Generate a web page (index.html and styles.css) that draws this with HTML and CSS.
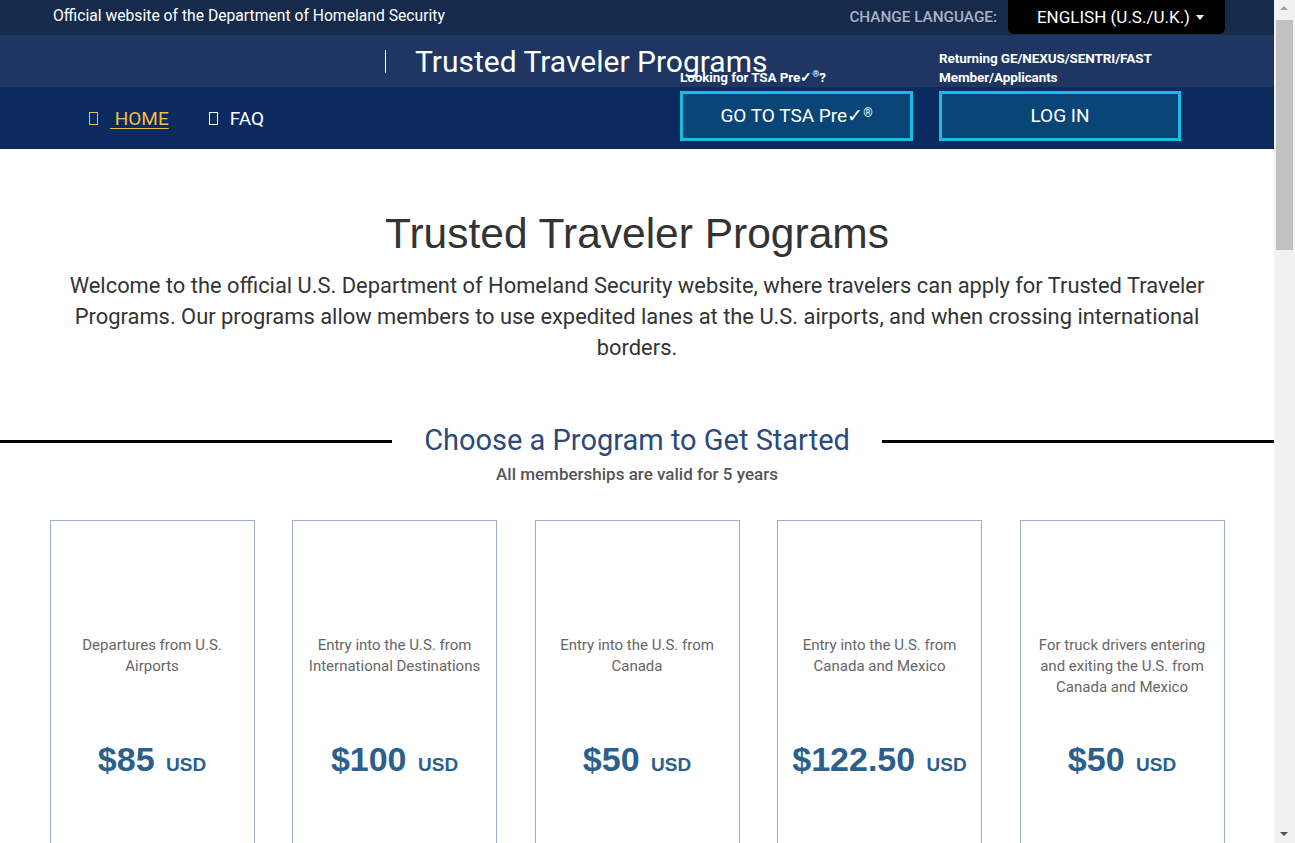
FILE: index.html
```html
<!DOCTYPE html>
<html lang="en">
<head>
<meta charset="utf-8">
<title>Trusted Traveler Programs</title>
<link rel="stylesheet" href="styles.css">
</head>
<body>
<div class="page">
<header class="header">
  <div class="topbar">
    <span class="official">Official website of the Department of Homeland Security</span>
    <div class="lang">
      <span class="lang-label">CHANGE LANGUAGE:</span>
      <button class="lang-btn">ENGLISH (U.S./U.K.) <span class="caret"></span></button>
    </div>
  </div>
  <div class="brandbar">
    <span class="divider"></span>
    <span class="brand-title">Trusted Traveler Programs</span>
  </div>
  <nav class="navbar">
    <a class="nav-link active" href="#"><span class="icon-box"></span> <span class="u">&nbsp;HOME</span></a>
    <a class="nav-link" href="#"><span class="icon-box"></span> <span>FAQ</span></a>
  </nav>
  <div class="actions">
    <div class="action">
      <span class="action-label">Looking for TSA Pre&#10003;<sup>&reg;</sup>?</span>
      <a class="action-btn" href="#">GO TO TSA Pre&#10003;<sup>&reg;</sup></a>
    </div>
    <div class="action wide">
      <span class="action-label">Returning GE/NEXUS/SENTRI/FAST<br>Member/Applicants</span>
      <a class="action-btn" href="#">LOG IN</a>
    </div>
  </div>
</header>

<main class="main">
  <section class="intro">
    <h1 class="page-title">Trusted Traveler Programs</h1>
    <p class="lead">Welcome to the official U.S. Department of Homeland Security website, where travelers can apply for Trusted Traveler Programs. Our programs allow members to use expedited lanes at the U.S. airports, and when crossing international borders.</p>
  </section>

  <section class="programs">
    <div class="section-head">
      <span class="rule"></span>
      <h2 class="section-title">Choose a Program to Get Started</h2>
      <span class="rule"></span>
    </div>
    <p class="section-sub">All memberships are valid for 5 years</p>

    <div class="cards">
      <div class="card">
        <p class="card-text">Departures from U.S. Airports</p>
        <p class="price">$85 <span class="cur">USD</span></p>
      </div>
      <div class="card">
        <p class="card-text">Entry into the U.S. from International Destinations</p>
        <p class="price">$100 <span class="cur">USD</span></p>
      </div>
      <div class="card">
        <p class="card-text">Entry into the U.S. from Canada</p>
        <p class="price">$50 <span class="cur">USD</span></p>
      </div>
      <div class="card">
        <p class="card-text">Entry into the U.S. from Canada and Mexico</p>
        <p class="price">$122.50 <span class="cur">USD</span></p>
      </div>
      <div class="card">
        <p class="card-text">For truck drivers entering and exiting the U.S. from Canada and Mexico</p>
        <p class="price">$50 <span class="cur">USD</span></p>
      </div>
    </div>
  </section>
</main>
</div>
<div class="scrollbar" aria-hidden="true">
  <span class="sb-up"></span>
  <span class="sb-thumb"></span>
  <span class="sb-down"></span>
</div>
</body>
</html>
```
FILE: styles.css
```css
body {
  margin: 0;
  font-family: Roboto, "Liberation Sans", Arial, sans-serif;
  color: #333;
  background: #fff;
}
.page { width: 1274px; }

/* decorative window scrollbar */
.scrollbar {
  position: fixed;
  top: 0;
  right: 0;
  width: 21px;
  height: 100vh;
  background: #f1f1f1;
}
.sb-up, .sb-down {
  position: absolute;
  left: 6px;
  width: 0; height: 0;
  border-left: 4px solid transparent;
  border-right: 4px solid transparent;
}
.sb-up { top: 6px; border-bottom: 4px solid #a3a3a3; }
.sb-down { bottom: 7px; border-top: 4px solid #505050; }
.sb-thumb {
  position: absolute;
  top: 20px;
  left: 2px;
  width: 17px;
  height: 230px;
  background: #c1c1c1;
}

.header { position: relative; }

.topbar {
  height: 35px;
  background: #162a4c;
  display: flex;
  align-items: flex-start;
  justify-content: space-between;
  padding: 0 49px 0 53px;
}
.official {
  color: #fff;
  font-size: 15.7px;
  line-height: 32px;
}
.lang { display: flex; align-items: flex-start; gap: 11px; }
.lang-label {
  color: #a8b2c3;
  font-size: 15.3px;
  font-weight: 500;
  line-height: 34px;
}
.lang-btn {
  height: 34px;
  width: 217px;
  border: 0;
  background: #000;
  color: #fff;
  font-family: Roboto, sans-serif;
  font-size: 17px;
  border-radius: 0 0 6px 6px;
  padding: 0 0 0 8px;
  display: flex;
  align-items: center;
  justify-content: center;
  gap: 6px;
}
.caret {
  width: 0; height: 0;
  border-left: 4px solid transparent;
  border-right: 4px solid transparent;
  border-top: 5px solid #fff;
}

.brandbar {
  height: 52px;
  background: #1e3661;
  display: flex;
  align-items: center;
  padding-left: 385px;
}
.divider {
  width: 1px;
  height: 23px;
  background: #fff;
  margin-right: 29px;
}
.brand-title {
  color: #fff;
  font-size: 30px;
  line-height: 52px;
  margin-top: 1px;
}

.navbar {
  height: 62px;
  background: #0b2a5f;
  display: flex;
  align-items: center;
  padding-left: 89px;
  gap: 40px;
}
.nav-link {
  color: #fff;
  font-size: 19px;
  text-decoration: none;
  display: flex;
  align-items: center;
}
.nav-link.active { color: #f0be45; }
.nav-link .u { text-decoration: underline; text-underline-offset: 3px; }
.icon-box {
  display: inline-block;
  width: 7px;
  height: 11px;
  border: 1px solid currentColor;
  margin-right: 12px;
}

.actions {
  position: absolute;
  top: 49px;
  left: 680px;
  display: flex;
  gap: 26px;
}
.action {
  display: flex;
  flex-direction: column;
  justify-content: flex-end;
  width: 233px;
}
.action.wide { width: 242px; }
.action-label {
  color: #fff;
  font-weight: 700;
  font-size: 13.5px;
  line-height: 19px;
  margin-bottom: 4px;
  letter-spacing: -0.1px;
}
.action-label sup { font-size: 9px; line-height: 0; }
.action-btn {
  display: flex;
  align-items: center;
  justify-content: center;
  height: 50px;
  box-sizing: border-box;
  border: 3px solid #15bde4;
  background: #0a4578;
  color: #fff;
  font-size: 19px;
  text-decoration: none;
  padding-bottom: 2px;
}
.action-btn sup { font-size: 12px; line-height: 0; position: relative; top: -2px; }

.main { min-height: 2830px; }

.intro {
  max-width: 1140px;
  margin: 0 auto;
  text-align: center;
  padding-top: 62px;
}
.page-title {
  margin: 0;
  font-family: "Liberation Sans", Arial, sans-serif;
  font-weight: 400;
  font-size: 42.5px;
  line-height: 46px;
  color: #333;
}
.lead {
  margin: 13px 0 0;
  font-size: 21.9px;
  line-height: 31px;
  color: #333;
}

.programs { padding-top: 60px; }
.section-head {
  display: flex;
  align-items: center;
  gap: 32px;
}
.rule {
  flex: 1;
  height: 3px;
  background: #000;
  margin-top: 2px;
}
.section-title {
  margin: 0;
  font-weight: 400;
  font-size: 29px;
  line-height: 34px;
  color: #2b4a7b;
}
.section-sub {
  margin: 6px 0 0;
  text-align: center;
  font-size: 17px;
  font-weight: 500;
  line-height: 22px;
  color: #555;
}

.cards {
  display: grid;
  grid-template-columns: repeat(5, 205px);
  gap: 37.5px;
  justify-content: center;
  margin-top: 35px;
}
.card {
  border: 1px solid #9badc7;
  height: 380px;
  box-sizing: border-box;
  padding: 114px 10px 0;
  text-align: center;
}
.card-text {
  margin: 0;
  height: 104px;
  font-size: 15px;
  line-height: 21px;
  color: #666;
}
.price {
  margin: 0;
  font-family: "Liberation Sans", Arial, sans-serif;
  font-weight: 700;
  font-size: 34px;
  line-height: 40px;
  color: #2b5f8c;
  white-space: nowrap;
}
.cur { font-size: 19px; margin-left: 2px; }
```
